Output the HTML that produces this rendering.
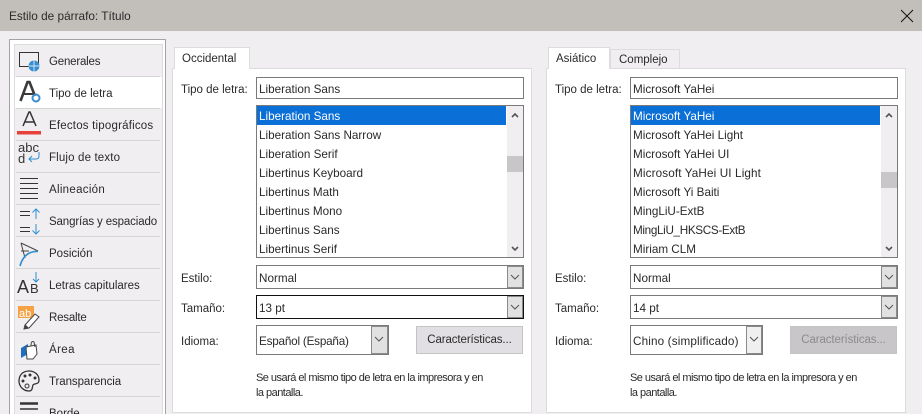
<!DOCTYPE html>
<html style="height:414px;overflow:hidden"><head><meta charset="utf-8">
<style>
html,body{margin:0;padding:0}
body{width:922px;height:414px;overflow:hidden;background:#f0eef0;position:relative}
#w{left:0;top:0;width:922px;height:414px;overflow:hidden;background:#f0eef0;font:11.5px "Liberation Sans",sans-serif;color:#2a2a2a}
div,svg{position:absolute;box-sizing:border-box}
.t{white-space:nowrap;line-height:16px;margin-top:1px}
.l{font-size:11.7px}
.n{font-size:11px;letter-spacing:-.53px}
.tb{left:0;top:0;width:922px;height:31px;background:#c2bfba}
.side{left:9px;top:39px;width:157px;height:375px;border:1px solid #a3a3a3;border-bottom:0;background:#fff}
.si{left:14px;width:149px;height:370px;top:44px;background:#f0eef0;border:1px solid #dcdcdc;border-bottom:0}
.sep{left:16px;width:144px;height:1px;background:#d6d5d6}
.panel{top:68px;width:360px;height:345px;background:#fff;border:1px solid #dcdcdc}
.tab{height:22px;background:#fff;border:1px solid #dcdcdc;border-bottom:0}
.box{background:#fff;border:1px solid #7a7a7a}
.sel{background:#0a6fd6;height:19px}
.arr{background:#e1e1e1;border:1px solid #8a8a8a}
.btn{background:#e1dfe3;border:1px solid #c4c4c4;text-align:center;line-height:27px;letter-spacing:-.1px}
</style></head><body><div id="w">
<div class="tb"></div>
<div class="t" style="left:9px;top:7px;font-size:11.8px">Estilo de párrafo: Título</div>
<svg style="left:900px;top:5px" width="16" height="20"><path d="M1 5 L13 17 M13 5 L1 17" stroke="#111" stroke-width="1"/></svg>

<div class="side"></div><div class="si"></div>
<div style="left:15px;top:77px;width:147px;height:31px;background:#fff"></div>
<div class="sep" style="top:76px"></div><div class="sep" style="top:108px"></div><div class="sep" style="top:140px"></div><div class="sep" style="top:172px"></div><div class="sep" style="top:204px"></div><div class="sep" style="top:236px"></div><div class="sep" style="top:268px"></div><div class="sep" style="top:300px"></div><div class="sep" style="top:332px"></div><div class="sep" style="top:364px"></div><div class="sep" style="top:396px"></div>

<div class="t" style="left:49px;top:53px;letter-spacing:-.2px">Generales</div>
<div class="t" style="left:49px;top:85px">Tipo de letra</div>
<div class="t" style="left:49px;top:117px;letter-spacing:.2px">Efectos tipográficos</div>
<div class="t" style="left:49px;top:149px;letter-spacing:.15px">Flujo de texto</div>
<div class="t" style="left:49px;top:181px;letter-spacing:.3px">Alineación</div>
<div class="t" style="left:49px;top:213px;letter-spacing:-.13px">Sangrías y espaciado</div>
<div class="t" style="left:49px;top:245px">Posición</div>
<div class="t" style="left:49px;top:277px">Letras capitulares</div>
<div class="t" style="left:49px;top:309px;letter-spacing:-.2px">Resalte</div>
<div class="t" style="left:49px;top:341px;letter-spacing:.4px">Área</div>
<div class="t" style="left:49px;top:373px;letter-spacing:-.08px">Transparencia</div>
<div class="t" style="left:49px;top:405px">Borde</div>

<svg style="left:14px;top:44px" width="30" height="370" fill="none">
<path d="M5.500 8.500H24.500V22.500H5.500Z" stroke="#333"/>
<circle cx="20" cy="22" r="5.500" fill="#3a8fd0"/><path d="M14.500 22H25.500M20 16.500V27.500" stroke="#fff" stroke-width=".7"/>
<path d="M6.500 57L13.500 38H15.500L21 52" stroke="#3a3a3a" stroke-width="2.600"/><path d="M10 50H19" stroke="#3a3a3a" stroke-width="2"/>
<circle cx="22" cy="54" r="3.500" stroke="#3a8fd0" stroke-width="2"/>
<path d="M9 82L15 68H16L22 82M11 78H20" stroke="#333" stroke-width="1.500"/>
<rect x="3" y="87" width="24" height="3.500" fill="#e8403a"/>
<text x="4" y="108" font-size="13" fill="#333" font-family="Liberation Sans">abc</text>
<text x="4" y="119" font-size="13" fill="#333" font-family="Liberation Sans">d</text>
<path d="M25 108V112Q25 115 22 115H15M18 112L15 115L18 118" stroke="#2f8fd0"/>
<path d="M6 134.500H24M6 139.500H24M6 144.500H24M6 149.500H24M6 154.500H24" stroke="#333" stroke-width="1"/>
<path d="M6 167.500H16M6 171.500H16M6 183.500H16M6 187.500H16" stroke="#333"/>
<path d="M22 175V165M18.500 168.500L22 165L25.500 168.500M22 180V190M18.500 186.500L22 190L25.500 186.500" stroke="#2f8fd0"/>
<path d="M7 199L24 207M7 199L11 214M7 207H15" stroke="#444" stroke-width="1"/>
<path d="M6 222Q10 207 24 207.500" stroke="#2f8fd0" stroke-width="1.600"/>
<text x="3" y="249" font-size="18" fill="#333" font-family="Liberation Sans">A</text><text x="16" y="249" font-size="13" fill="#333" font-family="Liberation Sans">B</text>
<path d="M22 228V238M19 235L22 238L25 235" stroke="#2f8fd0"/>
<rect x="4" y="262" width="16" height="12" fill="#f5a244"/>
<text x="5" y="273" font-size="11" fill="#fff" font-family="Liberation Sans">ab</text>
<path d="M11 281L21 270L25 273L15 284L10 285Z" stroke="#444" fill="#fff"/><path d="M10 285L11 280L15 284Z" fill="#444"/>
<path d="M7 314V304L14 300V310" fill="#1f6fc0"/>
<path d="M12 303L22 301L23 310L19 315H13Z" stroke="#444" fill="#fff"/><path d="M17 302Q17 296 20 298L21 303" stroke="#444"/>
<path d="M15 327C8 327 5 332 5 337C5 343 10 347 15 347C19 347 18 343 19 341C20 339 25 341 25 336C25 331 21 327 15 327Z" stroke="#333" stroke-width="1.300"/>
<circle cx="11" cy="332" r="1.500" fill="#333"/><circle cx="16" cy="331" r="1.500" fill="#333"/><circle cx="21" cy="334" r="1.500" fill="#333"/><circle cx="9" cy="337" r="1.500" fill="#333"/><circle cx="13" cy="342" r="2" stroke="#333"/>
<path d="M6 359.500H24" stroke="#333" stroke-width="2.500"/><path d="M6 365H24" stroke="#333" stroke-width="1.500"/>
</svg>

<!-- LEFT -->
<div class="panel" style="left:172px"></div>
<div class="tab" style="left:174px;top:47px;width:76px"></div>
<div class="t" style="left:182px;top:50px">Occidental</div>
<div class="t" style="left:181px;top:81px">Tipo de letra:</div>
<div class="box" style="left:256px;top:77px;width:268px;height:22px"></div>
<div class="t l" style="left:259px;top:81px">Liberation Sans</div>
<div class="box" style="left:256px;top:105px;width:268px;height:153px"></div>
<div class="sel" style="left:257px;top:106px;width:249px"></div>
<div style="left:507px;top:106px;width:16px;height:151px;background:#f0eef0"></div>
<div style="left:507px;top:156px;width:16px;height:16px;background:#c8c6c8"></div>
<svg style="left:507px;top:106px" width="16" height="151" fill="none"><path d="M5 11L8 8L11 11M5 141L8 144L11 141" stroke="#555" stroke-width="1.600"/></svg>
<div class="t l" style="left:259px;top:108px;color:#fff">Liberation Sans</div>
<div class="t l" style="left:259px;top:127px">Liberation Sans Narrow</div>
<div class="t l" style="left:259px;top:146px">Liberation Serif</div>
<div class="t l" style="left:259px;top:165px">Libertinus Keyboard</div>
<div class="t l" style="left:259px;top:184px">Libertinus Math</div>
<div class="t l" style="left:259px;top:203px">Libertinus Mono</div>
<div class="t l" style="left:259px;top:222px">Libertinus Sans</div>
<div class="t l" style="left:259px;top:241px">Libertinus Serif</div>
<div class="t" style="left:181px;top:270px">Estilo:</div>
<div class="box" style="left:256px;top:265px;width:268px;height:24px"></div>
<div class="arr" style="left:507px;top:266px;width:16px;height:22px"></div>
<div class="t l" style="left:259px;top:270px">Normal</div>
<div class="t" style="left:181px;top:300px">Tamaño:</div>
<div class="box" style="left:256px;top:295px;width:268px;height:24px;border-color:#111"></div>
<div class="arr" style="left:507px;top:296px;width:16px;height:22px"></div>
<div class="t l" style="left:259px;top:300px">13 pt</div>
<div class="t" style="left:181px;top:333px">Idioma:</div>
<div class="box" style="left:256px;top:325px;width:133px;height:30px"></div>
<div class="arr" style="left:371px;top:326px;width:17px;height:28px"></div>
<div class="t l" style="left:259px;top:333px;letter-spacing:-.2px">Español (España)</div>
<div class="btn" style="left:416px;top:326px;width:107px;height:28px">Características...</div>
<div class="t n" style="left:256px;top:369px">Se usará el mismo tipo de letra en la impresora y en</div>
<div class="t n" style="left:256px;top:384px">la pantalla.</div>

<!-- RIGHT -->
<div class="panel" style="left:546px"></div>
<div class="tab" style="left:548px;top:47px;width:62px"></div>
<div class="tab" style="left:610px;top:49px;width:70px;height:19px;background:#f0eef0"></div>
<div class="t" style="left:556px;top:50px">Asiático</div>
<div class="t" style="left:619px;top:51px">Complejo</div>
<div class="t" style="left:555px;top:81px">Tipo de letra:</div>
<div class="box" style="left:630px;top:77px;width:268px;height:22px"></div>
<div class="t l" style="left:633px;top:81px">Microsoft YaHei</div>
<div class="box" style="left:630px;top:105px;width:268px;height:153px"></div>
<div class="sel" style="left:631px;top:106px;width:249px"></div>
<div style="left:881px;top:106px;width:16px;height:151px;background:#f0eef0"></div>
<div style="left:881px;top:172px;width:16px;height:16px;background:#c8c6c8"></div>
<svg style="left:881px;top:106px" width="16" height="151" fill="none"><path d="M5 11L8 8L11 11M5 141L8 144L11 141" stroke="#555" stroke-width="1.600"/></svg>
<div class="t l" style="left:633px;top:108px;color:#fff">Microsoft YaHei</div>
<div class="t l" style="left:633px;top:127px">Microsoft YaHei Light</div>
<div class="t l" style="left:633px;top:146px">Microsoft YaHei UI</div>
<div class="t l" style="left:633px;top:165px;letter-spacing:.13px">Microsoft YaHei UI Light</div>
<div class="t l" style="left:633px;top:184px">Microsoft Yi Baiti</div>
<div class="t l" style="left:633px;top:203px">MingLiU-ExtB</div>
<div class="t l" style="left:633px;top:222px;letter-spacing:-.33px">MingLiU_HKSCS-ExtB</div>
<div class="t l" style="left:633px;top:241px">Miriam CLM</div>
<div class="t" style="left:555px;top:270px">Estilo:</div>
<div class="box" style="left:630px;top:265px;width:268px;height:24px"></div>
<div class="arr" style="left:881px;top:266px;width:16px;height:22px"></div>
<div class="t l" style="left:633px;top:270px">Normal</div>
<div class="t" style="left:555px;top:300px">Tamaño:</div>
<div class="box" style="left:630px;top:295px;width:268px;height:24px"></div>
<div class="arr" style="left:881px;top:296px;width:16px;height:22px"></div>
<div class="t l" style="left:633px;top:300px">14 pt</div>
<div class="t" style="left:555px;top:333px">Idioma:</div>
<div class="box" style="left:630px;top:325px;width:133px;height:30px"></div>
<div class="arr" style="left:746px;top:326px;width:16px;height:28px;background:#f0f0f0"></div>
<div class="t l" style="left:633px;top:333px;letter-spacing:.15px">Chino (simplificado)</div>
<div class="btn" style="left:790px;top:326px;width:107px;height:28px;background:#c8c6c8;color:#8c8c8c">Características...</div>
<div class="t n" style="left:630px;top:369px">Se usará el mismo tipo de letra en la impresora y en</div>
<div class="t n" style="left:630px;top:384px">la pantalla.</div>

<svg style="left:0;top:0" width="922" height="414" fill="none"><path d="M511 275L515 279L519 275M511 305L515 309L519 305M375 337L379 341L383 337M885 275L889 279L893 275M885 305L889 309L893 305M750 337L754 341L758 337" stroke="#555"/></svg>
</div></body></html>
